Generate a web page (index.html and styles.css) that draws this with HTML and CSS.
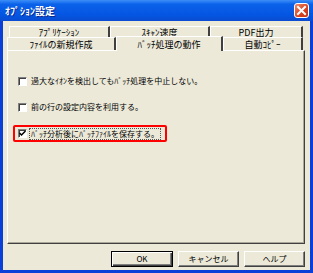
FILE: index.html
```html
<!DOCTYPE html>
<html lang="ja">
<head>
  <meta charset="UTF-8">
  <title>ｵﾌﾟｼｮﾝ設定</title>
  <link rel="stylesheet" href="styles.css">
</head>
<body>

  <div class="window">
    <div class="titlebar">
      <span class="title">ｵﾌﾟｼｮﾝ設定</span>
      <div class="close">
        <svg width="15" height="15" viewBox="0 0 15 15">
          <path d="M4 4 L11 11 M11 4 L4 11" stroke="#fff" stroke-width="2" stroke-linecap="square"/>
        </svg>
      </div>
    </div>

    <div class="body">
      <div class="tabs">
        <div class="tabrow back">
          <div class="tab t1">ｱﾌﾟﾘｹｰｼｮﾝ</div>
          <div class="tab t2">ｽｷｬﾝ速度</div>
          <div class="tab t3">PDF出力</div>
        </div>
        <div class="tabrow front">
          <div class="tab t4">ﾌｧｲﾙの新規作成</div>
          <div class="tab t5 active">ﾊﾞｯﾁ処理の動作</div>
          <div class="tab t6">自動ｺﾋﾟｰ</div>
        </div>
      </div>

      <div class="panel">
        <div class="opt">
          <span class="box"></span>
          <span class="label">過大なｲｵﾝを検出してもﾊﾞｯﾁ処理を中止しない。</span>
        </div>
        <div class="opt">
          <span class="box"></span>
          <span class="label">前の行の設定内容を利用する。</span>
        </div>
        <div class="opt marked">
          <span class="box checked">
            <svg width="7" height="7" viewBox="0 0 7 7">
              <path d="M0.5 3 L2.5 5 L6.5 1" stroke="#000" stroke-width="1.5" fill="none"/>
            </svg>
          </span>
          <span class="label focus">ﾊﾞｯﾁ分析後にﾊﾞｯﾁﾌｧｲﾙを保存する。</span>
        </div>
      </div>

      <div class="buttons">
        <div class="btn default">OK</div>
        <div class="btn">キャンセル</div>
        <div class="btn">ヘルプ</div>
      </div>
    </div>
  </div>

</body>
</html>
```

FILE: styles.css
```css
* {
  margin: 0;
  padding: 0;
  box-sizing: border-box;
}

body {
  font-family: "Noto Sans CJK JP", sans-serif;
  font-size: 8px;
  color: #000;
  background: #fff;
}

.window {
  width: 313px;
  height: 273px;
  border: 3px solid #0a3fd8;
  border-top: none;
  background: #ece9d8;
  display: flex;
  flex-direction: column;
}

.titlebar {
  height: 21px;
  margin: 0 -3px;
  background: linear-gradient(to bottom, #3d8ff7 0%, #0b62ea 20%, #0456e2 70%, #0a4bd0 100%);
  display: flex;
  align-items: center;
  justify-content: space-between;
  padding: 0 4px 0 5px;
}

.title {
  color: #fff;
  font-weight: bold;
  font-size: 10px;
  text-shadow: 1px 1px 0 #0a2a8c;
}

.close {
  width: 15px;
  height: 15px;
  border: 1px solid #fff;
  border-radius: 3px;
  background: linear-gradient(to bottom right, #ec8a6a, #d9401e 60%, #c43412);
  display: flex;
}

.close svg {
  margin: -1px;
}

.body {
  flex: 1;
  padding: 5px 5px 3px 4px;
  display: flex;
  flex-direction: column;
}

.tabs {
  width: 298px;
}

.tabrow {
  display: flex;
}

.tabrow.back {
  height: 11px;
  padding-left: 2px;
}

.tabrow.front {
  height: 13px;
}

.tab {
  background: #ece9d8;
  border-top: 1px solid #fff;
  border-left: 1px solid #fff;
  border-right: 2px solid #404040;
  display: flex;
  align-items: center;
  justify-content: center;
  font-size: 9px;
  line-height: 1;
}

.t1 { width: 101px; }
.t2 { width: 100px; }
.t3 { width: 93px; }
.t4 { width: 109px; }
.t5 { width: 107px; }
.t6 { width: 80px; }

.tab.active {
  position: relative;
  top: -1px;
  height: 15px;
  z-index: 1;
}

.panel {
  height: 194px;
  border-top: 1px solid #fff;
  border-left: 1px solid #fff;
  border-right: 1px solid #404040;
  border-bottom: 1px solid #404040;
  box-shadow: inset -1px -1px 0 #aca899;
  padding: 23px 0 0 10px;
  display: flex;
  flex-direction: column;
  gap: 12px;
}

.opt {
  display: flex;
  align-items: center;
  height: 14px;
  gap: 3px;
}

.opt.marked {
  width: fit-content;
  height: 17px;
  margin: -1px 0 0 -5px;
  padding: 0 5px 0 3px;
  border: 2px solid #f00;
  border-radius: 2px;
}

.box {
  width: 9px;
  height: 9px;
  background: #fff;
  border-top: 1px solid #808080;
  border-left: 1px solid #808080;
  border-right: 1px solid #fff;
  border-bottom: 1px solid #fff;
  box-shadow: inset 1px 1px 0 #404040;
  display: flex;
  align-items: center;
  justify-content: center;
}

.label {
  line-height: 1;
  padding: 1px;
}

.label.focus {
  outline: 1px dotted #555;
}

.buttons {
  margin-top: 7px;
  display: flex;
  justify-content: flex-end;
  gap: 5px;
}

.btn {
  width: 61px;
  height: 16px;
  border-top: 1px solid #fff;
  border-left: 1px solid #fff;
  border-right: 1px solid #404040;
  border-bottom: 1px solid #404040;
  box-shadow: inset -1px -1px 0 #808080;
  display: flex;
  align-items: center;
  justify-content: center;
  line-height: 1;
}

.btn.default {
  width: 62px;
  border: 1px solid #000;
  box-shadow: inset 1px 1px 0 #fff, inset -1px -1px 0 #404040, inset -2px -2px 0 #808080;
}
```
